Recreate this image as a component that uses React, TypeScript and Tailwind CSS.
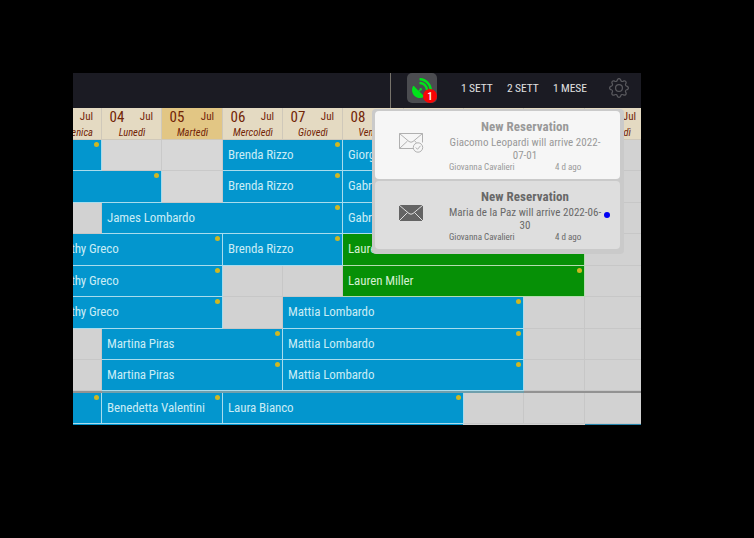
import React from 'react';
import { FaSatelliteDish } from 'react-icons/fa';
import { BsGear } from 'react-icons/bs';

type Cell = { w: string; kind: 'free' | 'light' | 'blue' | 'green'; name?: string; dot?: boolean; clip?: boolean };

const free = (w: string): Cell => ({ w, kind: 'free' });
const light = (w: string): Cell => ({ w, kind: 'light' });
const blue = (w: string, name?: string, dot = true, clip = false): Cell => ({ w, kind: 'blue', name, dot, clip });
const green = (w: string, name: string, dot = true): Cell => ({ w, kind: 'green', name, dot });

const rows: { h: string; cells: Cell[] }[] = [
  { h: 'h-[31px]', cells: [blue('w-[29px]'), light('w-[60px]'), light('w-[61px]'), blue('w-[120px]', 'Brenda Rizzo'), blue('w-[181px]', 'Giorgia Conti'), free('w-[61px]'), free('w-[56px]')] },
  { h: 'h-[32px] pb-px', cells: [blue('w-[89px]'), light('w-[61px]'), blue('w-[120px]', 'Brenda Rizzo'), blue('w-[181px]', 'Gabriele Serra'), free('w-[61px]'), free('w-[56px]')] },
  { h: 'h-[31px]', cells: [free('w-[29px]'), blue('w-[241px]', 'James Lombardo'), blue('w-[181px]', 'Gabriele Serra'), free('w-[61px]'), free('w-[56px]')] },
  { h: 'h-[32px] pb-px', cells: [blue('w-[150px]', 'Dorothy Greco', true, true), blue('w-[120px]', 'Brenda Rizzo'), green('w-[242px]', 'Lauren Miller'), free('w-[56px]')] },
  { h: 'h-[31px]', cells: [blue('w-[150px]', 'Dorothy Greco', true, true), free('w-[60px]'), free('w-[60px]'), green('w-[242px]', 'Lauren Miller'), free('w-[56px]')] },
  { h: 'h-[32px] pb-px', cells: [blue('w-[150px]', 'Dorothy Greco', true, true), free('w-[60px]'), blue('w-[241px]', 'Mattia Lombardo'), free('w-[61px]'), free('w-[56px]')] },
  { h: 'h-[31px]', cells: [free('w-[29px]'), blue('w-[181px]', 'Martina Piras'), blue('w-[241px]', 'Mattia Lombardo'), free('w-[61px]'), free('w-[56px]')] },
  { h: 'h-[31px]', cells: [free('w-[29px]'), blue('w-[181px]', 'Martina Piras'), blue('w-[241px]', 'Mattia Lombardo'), free('w-[61px]'), free('w-[56px]')] },
  { h: 'h-[31px]', cells: [blue('w-[29px]'), blue('w-[121px]', 'Benedetta Valentini'), blue('w-[241px]', 'Laura Bianco'), free('w-[60px]'), free('w-[61px]'), free('w-[56px]')] },
];

const days = [
  { w: 'w-[60px]', n: '04', d: 'Lunedì' },
  { w: 'w-[61px]', n: '05', d: 'Martedì' },
  { w: 'w-[60px]', n: '06', d: 'Mercoledì' },
  { w: 'w-[60px]', n: '07', d: 'Giovedì' },
  { w: 'w-[61px]', n: '08', d: 'Venerdì' },
  { w: 'w-[60px]', n: '09', d: 'Sabato' },
  { w: 'w-[60px]', n: '10', d: 'Domenica' },
  { w: 'w-[61px]', n: '11', d: 'Lunedì' },
];

const tones = {
  free: 'bg-[#d2d2d2] border-[#c7c7c7]',
  light: 'bg-[#d7d7d7] border-[#c9c9c9]',
  blue: 'bg-[#0396ce] border-[#a9dced]',
  green: 'bg-[#069006] border-[#b4dcb0]',
};

function Segment({ c, last, tall }: { c: Cell; last: boolean; tall: boolean }) {
  return (
    <div className={`relative flex shrink-0 items-center overflow-hidden border-b ${tall ? 'h-[32px] pb-[2px]' : 'h-[31px]'} ${last ? '' : 'border-r'} ${c.w} ${tones[c.kind]}`}>
      {c.name && (
        <span className={`whitespace-nowrap text-[13px] leading-4 tracking-[-0.1px] ${c.kind === 'green' ? 'text-[#d3efd0]' : 'text-[#c9ecf5]'} ${c.clip ? '-ml-[26px]' : 'ml-[5px]'}`}>{c.name}</span>
      )}
      {c.dot && <i className="absolute right-[2px] top-[2px] size-[5px] rounded-full bg-[#cfb722]" />}
    </div>
  );
}

function Mail({ read }: { read: boolean }) {
  return read ? (
    <svg className="h-[21px] w-[26px]" viewBox="0 0 26 21" fill="none" stroke="#b0b0b0" strokeWidth="1">
      <path d="M15 16.500H.5v-15h23v9" />
      <path d="M.5 1.500 10 9.500q2 1.500 4 0l9.500-8M.5 16.500 8.500 9M15.500 9l2 1.500" />
      <circle cx="19" cy="15.500" r="4.700" fill="#f6f6f6" />
      <path d="m16.800 15.500 1.700 1.800 3-3.500" />
    </svg>
  ) : (
    <svg className="h-[16px] w-[24px]" viewBox="0 0 24 16">
      <path d="M0 0h24v16H0z" fill="#646464" />
      <path d="m0 0 10 8.500q2 1.500 4 0L24 0M0 16l8.500-8.500M24 16l-8.500-8.500" fill="none" stroke="#dedede" strokeWidth="1" />
    </svg>
  );
}

function Notice({ read, text, end }: { read: boolean; text: string; end: string }) {
  return (
    <div className={`relative flex h-[68px] rounded-[4px] ${read ? 'bg-[#f6f6f6] text-[#999999]' : 'bg-[#dedede] text-[#686868]'}`}>
      <div className={`w-[74px] shrink-0 pl-[24px] ${read ? 'pt-[21px]' : 'pt-[24px]'}`}>
        <Mail read={read} />
      </div>
      <div className="w-[152px] pt-[8px]">
        <div className="text-center text-[13px] font-bold leading-4 tracking-[0.05px]">New Reservation</div>
        <div className="whitespace-nowrap text-center text-[11px] leading-[13px] tracking-[0.02px]">
          <div className="pt-[1px]">{text}</div>
          <div>{end}</div>
        </div>
        <div className="flex whitespace-nowrap text-[9px] leading-[10px]">
          <span className="w-[106px]">Giovanna Cavalieri</span>
          <span>4 d ago</span>
        </div>
      </div>
      {!read && <i className="absolute right-[10px] top-[31px] size-[6px] rounded-full bg-[#0000f5]" />}
    </div>
  );
}

export default function App() {
  return (
    <div className="h-[538px] w-[754px] overflow-hidden bg-black pl-[73px] pt-[73px] font-['Roboto_Condensed',Roboto,sans-serif] [font-stretch:75%]">
      <div className="relative h-[352px] w-[568px] overflow-hidden bg-[#d2d2d2]">
        <header className="flex h-[35px] items-start bg-[#1b1b23] text-[11.5px] tracking-[-0.1px] text-[#e0e0e0]">
          <div className="h-full w-[318px] border-r border-[#77736b]" />
          <div className="relative ml-[16px] h-[30px] w-[30px] rounded-[5px] bg-[#4b4c50]">
            <FaSatelliteDish className="ml-[5px] mt-[5px] size-[20px] text-[#00e31a]" />
            <span className="absolute bottom-0 right-0 flex size-[14px] items-center justify-center rounded-full bg-[#f90505] text-[11px] font-medium leading-none text-white">1</span>
          </div>
          <span className="ml-[24px] mt-[7px] w-[46px] leading-4">1 SETT</span>
          <span className="mt-[7px] w-[46px] leading-4">2 SETT</span>
          <span className="mt-[7px] w-[56px] leading-4">1 MESE</span>
          <BsGear className="mt-[5px] size-[20px] text-[#59595e]" />
        </header>

        <div className="flex h-[32px] text-[#722506]">
          <div className="flex h-full w-[29px] shrink-0 flex-col items-end overflow-hidden border-b border-r border-[#cfc8ba] bg-[#e4dac2] pr-[8px]">
            <span className="mt-[1px] text-[11px] leading-4">Jul</span>
            <span className="mt-[1px] whitespace-nowrap text-[10.5px] italic leading-[13px]">Domenica</span>
          </div>
          {days.map((d, i) => (
            <div key={d.n} className={`h-full shrink-0 border-b border-r border-[#cfc8ba] ${d.w} ${i === 1 ? 'bg-[#e2c684]' : 'bg-[#e4dac2]'}`}>
              <div className="flex h-[18px] items-center justify-between pl-[7.5px] pr-[8px]">
                <span className="text-[15px] leading-[18px]">{d.n}</span>
                <span className="text-[11px] leading-4">Jul</span>
              </div>
              <div className="pl-px text-center text-[10.5px] italic leading-[13px]">{d.d}</div>
            </div>
          ))}
          <div className="h-full w-[56px] border-b border-[#cfc8ba] bg-[#e4dac2]">
            <div className="flex h-[18px] items-center justify-between pl-[7px] pr-[5px]">
              <span className="text-[15px] leading-[18px]">12</span>
              <span className="text-[11px] leading-4">Jul</span>
            </div>
            <div className="pr-[10px] text-right text-[10.5px] italic leading-[13px]">Martedì</div>
          </div>
        </div>

        {rows.map((r, i) => {
          const tall = r.h.startsWith('h-[32px]');
          return (
            <React.Fragment key={i}>
              {i === 8 && (
                <div className="flex h-[2px]">
                  <div className="w-[29px] bg-[#929292]" />
                  <div className="w-[422px] bg-[#6f9fac]" />
                  <div className="flex-1 bg-[#929292]" />
                </div>
              )}
              <div className={`flex ${tall ? 'h-[32px]' : 'h-[31px]'}`}>
                {r.cells.map((c, k) => <Segment key={k} c={c} tall={tall} last={k === r.cells.length - 1} />)}
              </div>
            </React.Fragment>
          );
        })}
        <div className="flex h-[1px]">
          <div className="w-[390px] bg-[#0396ce]" />
          <div className="w-[122px] bg-[#d2d2d2]" />
          <div className="flex-1 bg-[#2584ab]" />
        </div>

        <div className="absolute left-[299px] top-[36px] flex h-[145px] w-[252px] flex-col gap-[2px] rounded-[4px] bg-[#cacaca] pb-[4px] pl-[3px] pr-[4px] pt-[2px]">
          <Notice read text="Giacomo Leopardi will arrive 2022-" end="07-01" />
          <Notice read={false} text="Maria de la Paz will arrive 2022-06-" end="30" />
        </div>
      </div>
    </div>
  );
}
